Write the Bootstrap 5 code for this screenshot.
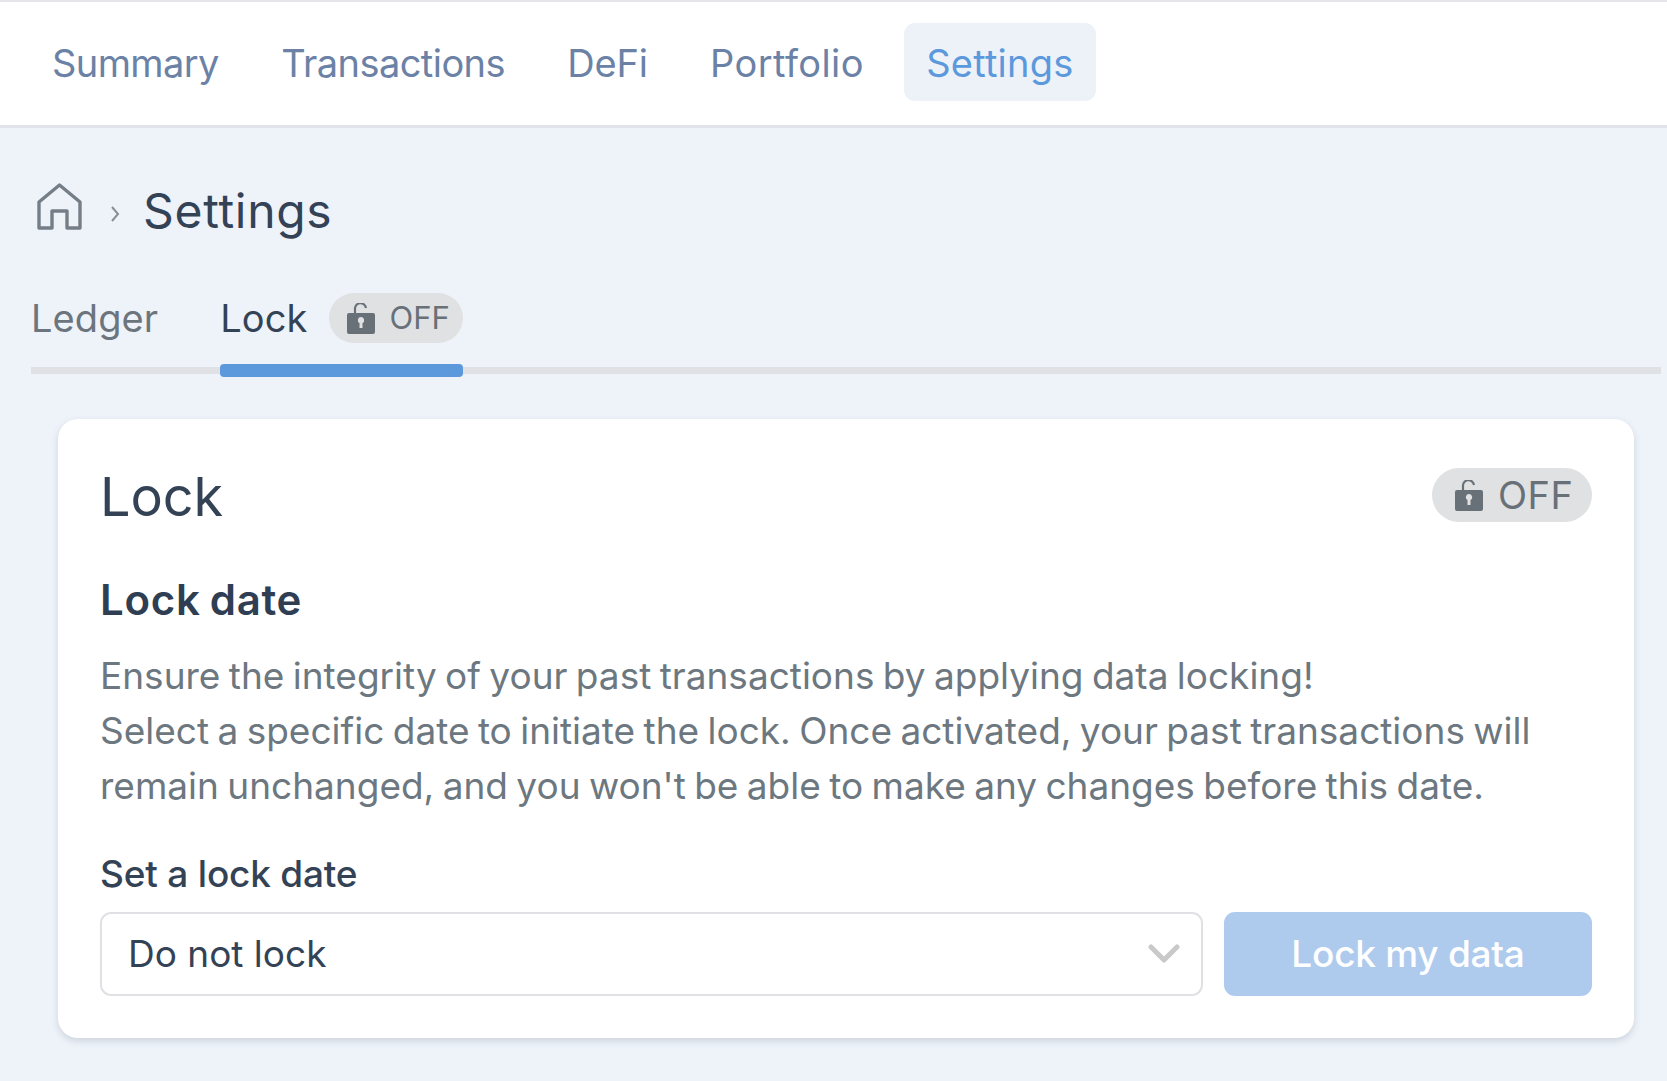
<!DOCTYPE html>
<html lang="en">
<head>
<meta charset="utf-8">
<title>Settings</title>
<link href="https://cdn.jsdelivr.net/npm/bootstrap@5.3.0/dist/css/bootstrap.min.css" rel="stylesheet">
<style>
body{background:#eef3fa;font-family:Inter,"Liberation Sans",sans-serif;color:#344256;height:1081px;overflow:hidden}
.topbar{background:#fff;border-top:2px solid #e4e6e9;border-bottom:3px solid #e0e4ea;height:128px;padding:21px 0 0 30px;gap:18.3px}
.topbar .nav-link{height:78px;padding:1px 22px 0;font-size:38px;line-height:78px;color:#6b82a6;letter-spacing:-.2px;border-radius:11px}
.topbar .nav-item:nth-child(1) .nav-link{letter-spacing:-.6px}
.topbar .nav-item:nth-child(2) .nav-link{letter-spacing:-.55px}
.topbar .nav-item:nth-child(4) .nav-link{letter-spacing:.4px}
.topbar .nav-item:nth-child(5) .nav-link{letter-spacing:.25px}
.topbar .nav-link.active{background:#edf2f9;color:#5b99dc}
.pagebody{padding:0 6px 0 31px}
.crumb{height:91px;margin:37px 0 2px;padding-left:6px}
.crumb .homeic{margin-bottom:9px}
.crumb .sep{width:10px;margin:6px 23px 0 28px;display:block}
.crumb h1{font-size:48px;font-weight:400;margin:0;line-height:1;letter-spacing:.7px;color:#344256}
.tabrow{height:119px;border:0;position:relative;align-items:flex-start;padding-top:35px}
.tabline{position:absolute;left:0;right:0;top:109px;height:7px;background:#dfe1e4}
.tabitem{font-size:38px;line-height:50px;color:#6c757d;letter-spacing:.1px}
.tabcur{color:#344256;margin-left:62px;position:relative;height:50px}
.tabcur::after{content:"";position:absolute;left:0;right:0;top:71px;height:13px;background:#5b99dc;border-radius:4px}
.stat{background:#e0e1e3;color:#687078;border-radius:30px;letter-spacing:0}
.stat-sm{height:50px;width:134px;margin-left:21px;font-size:31px;gap:15px;padding-left:18px}
.stat-lg{height:54px;width:160px;font-size:38px;gap:15px;padding-left:23px;letter-spacing:.5px}
.lockcard{margin:42px 27px 0;height:619px;border:0;border-radius:20px;background:#fff;box-shadow:0 3px 7px rgba(60,70,90,.18);padding:49px 42px 0 42px;width:1576px}
.lockcard h2{font-size:54px;font-weight:400;margin:2px 0 0;line-height:54px;letter-spacing:-.1px;color:#344256}
.lockcard h3{font-size:42px;font-weight:600;margin:51px 0 0;line-height:50px;letter-spacing:.7px;word-spacing:-2px;color:#2f3e52}
.copy{font-size:37px;line-height:55px;color:#6c7780;margin:23px 0 0;word-spacing:-2px;white-space:nowrap}
.setlabel{font-size:37px;line-height:50px;font-weight:500;margin:36px 0 13px;color:#344256;letter-spacing:-.2px}
.picker{height:84px;width:1103px;border:2px solid #dfe1e4;border-radius:11px;font-size:37px;color:#344256;padding:0 0 0 26px;position:relative;line-height:80px;box-shadow:none}
.picker svg{position:absolute;right:21px;top:30px}
.lockbtn{width:368px;height:84px;margin-left:21px;background:#aecbee;border:0;border-radius:11px;color:#fff;font-size:37px;font-weight:500;letter-spacing:-.25px;padding:0;opacity:1}
</style>
</head>
<body>
<ul class="nav topbar">
<li class="nav-item"><a class="nav-link" href="#">Summary</a></li>
<li class="nav-item"><a class="nav-link" href="#">Transactions</a></li>
<li class="nav-item"><a class="nav-link" href="#">DeFi</a></li>
<li class="nav-item"><a class="nav-link" href="#">Portfolio</a></li>
<li class="nav-item"><a class="nav-link active" href="#">Settings</a></li>
</ul>
<main class="pagebody">
<div class="crumb d-flex align-items-center">
<svg class="homeic" width="45" height="47" viewBox="0 0 45 47" fill="none" stroke="#757e87" stroke-width="3.4" stroke-linejoin="round" stroke-linecap="round"><path d="M2 19 22.5 2 43 19V45H30V28H15V45H2Z"/></svg>
<svg class="sep" height="20" viewBox="0 0 10 20" fill="none" stroke="#868e96" stroke-width="2"><path d="M2 3 8 10 2 17"/></svg>
<h1>Settings</h1>
</div>
<div class="tabrow d-flex">
<div class="tabline"></div>
<div class="tabitem">Ledger</div>
<div class="tabitem tabcur d-flex align-items-center">Lock
<span class="stat stat-sm d-flex align-items-center"><svg width="28" height="31" viewBox="0 0 28 31"><path d="M8 11V6.5a5.5 5.5 0 0 1 11-1.5" fill="none" stroke="#687078" stroke-width="2.2"/><path fill-rule="evenodd" fill="#687078" d="M2 10H26a2 2 0 0 1 2 2V29a2 2 0 0 1-2 2H2a2 2 0 0 1-2-2V12a2 2 0 0 1 2-2ZM14 14a3.2 3.2 0 0 0-1.5 6V25h3V20A3.2 3.2 0 0 0 14 14Z"/></svg>OFF</span>
</div>
</div>
<section class="card lockcard">
<div class="d-flex justify-content-between align-items-start">
<h2>Lock</h2>
<span class="stat stat-lg d-flex align-items-center"><svg width="28" height="31" viewBox="0 0 28 31"><path d="M8 11V6.5a5.5 5.5 0 0 1 11-1.5" fill="none" stroke="#687078" stroke-width="2.2"/><path fill-rule="evenodd" fill="#687078" d="M2 10H26a2 2 0 0 1 2 2V29a2 2 0 0 1-2 2H2a2 2 0 0 1-2-2V12a2 2 0 0 1 2-2ZM14 14a3.2 3.2 0 0 0-1.5 6V25h3V20A3.2 3.2 0 0 0 14 14Z"/></svg>OFF</span>
</div>
<h3>Lock date</h3>
<p class="copy">Ensure the integrity of your past transactions by applying data locking!<br>Select a specific date to initiate the lock. Once activated, your past transactions will<br>remain unchanged, and you won't be able to make any changes before this date.</p>
<div class="setlabel">Set a lock date</div>
<div class="d-flex">
<div class="picker">Do not lock<svg width="32" height="20" viewBox="0 0 32 20" fill="none" stroke="#c9c9c9" stroke-width="5" stroke-linecap="round" stroke-linejoin="round"><path d="M3 3 16 16 29 3"/></svg></div>
<button class="btn lockbtn" type="button">Lock my data</button>
</div>
</section>
</main>
<script src="https://cdn.jsdelivr.net/npm/bootstrap@5.3.0/dist/js/bootstrap.bundle.min.js"></script>
</body>
</html>
